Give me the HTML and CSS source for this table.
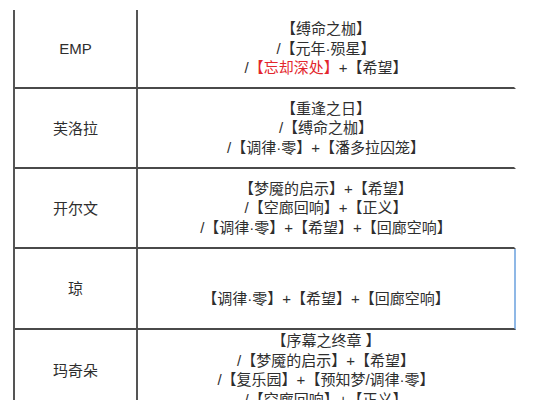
FILE: index.html
```html
<!DOCTYPE html>
<html lang="zh-CN">
<head>
<meta charset="utf-8">
<title>角色搭配</title>
<link rel="stylesheet" href="styles.css">
</head>
<body>
<div class="table">
  <div class="row r1">
    <div class="name">EMP</div>
    <div class="combo">
      <div class="line">【缚命之枷】</div>
      <div class="line">/【元年·殒星】</div>
      <div class="line">/<span class="red">【忘却深处】</span>+【希望】</div>
    </div>
  </div>
  <div class="row r2">
    <div class="name">芙洛拉</div>
    <div class="combo">
      <div class="line">【重逢之日】</div>
      <div class="line">/【缚命之枷】</div>
      <div class="line">/【调律·零】+【潘多拉囚笼】</div>
    </div>
  </div>
  <div class="row r3">
    <div class="name">开尔文</div>
    <div class="combo">
      <div class="line">【梦魇的启示】+【希望】</div>
      <div class="line">/【空廊回响】+【正义】</div>
      <div class="line">/【调律·零】+【希望】+【回廊空响】</div>
    </div>
  </div>
  <div class="row r4 selected">
    <div class="name">琼</div>
    <div class="combo">
      <div class="line">&nbsp;</div>
      <div class="line">【调律·零】+【希望】+【回廊空响】</div>
    </div>
  </div>
  <div class="row r5">
    <div class="name">玛奇朵</div>
    <div class="combo">
      <div class="line">【序幕之终章 】</div>
      <div class="line">/【梦魇的启示】+【希望】</div>
      <div class="line">/【复乐园】+【预知梦/调律·零】</div>
      <div class="line">/【空廊回响】+【正义】</div>
    </div>
  </div>
</div>
</body>
</html>
```

FILE: styles.css
```css
html, body {
  margin: 0;
  padding: 0;
  background: #ffffff;
  height: 100%;
  overflow: hidden;
}

.table {
  margin: 10px 0 0 13px;
  width: 501px;
  border-left: 2px solid #555555;
  font-family: "Liberation Sans", "Noto Sans CJK SC", sans-serif;
  font-size: 15px;
  color: #2e2e2e;
}

.row {
  display: grid;
  grid-template-columns: 123px 1fr;
  border-bottom: 2px solid #4a4a4a;
  border-right: 2px solid transparent;
}

.row.selected {
  border-right-color: #8fb8e6;
}

.r1 { height: 77px; }
.r2 { height: 78px; }
.r3 { height: 78px; }
.r4 { height: 79px; }
.r5 { height: 80px; border-bottom: none; }

.name {
  display: flex;
  align-items: center;
  justify-content: center;
  border-right: 2px solid #555555;
  line-height: 19px;
}

.combo {
  display: flex;
  flex-direction: column;
  justify-content: center;
  align-items: center;
  line-height: 19.5px;
  white-space: pre;
}

.line {
  word-spacing: 0;
}

.red {
  color: #e3262d;
}
```
